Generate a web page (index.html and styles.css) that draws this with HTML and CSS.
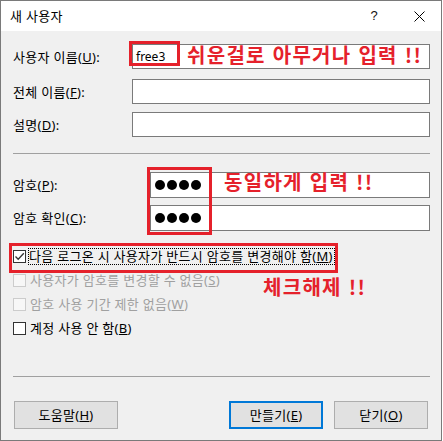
FILE: index.html
```html
<!DOCTYPE html>
<html lang="ko">
<head>
<meta charset="utf-8">
<title>새 사용자</title>
<link rel="stylesheet" href="styles.css">
</head>
<body>
<div class="dialog">
  <div class="titlebar">
    <span class="title">새 사용자</span>
    <span class="help">?</span>
    <svg class="close" width="11" height="11" viewBox="0 0 11 11"><path d="M0.5 0.5 L10.5 10.5 M10.5 0.5 L0.5 10.5" stroke="#000" stroke-width="1" fill="none"/></svg>
  </div>
  <div class="content">
    <div class="field first">
      <span class="label">사용자 이름(<u>U</u>):</span>
      <div class="box"><span class="val">free3</span></div>
    </div>
    <div class="field second">
      <span class="label">전체 이름(<u>F</u>):</span>
      <div class="box"></div>
    </div>
    <div class="field third">
      <span class="label">설명(<u>D</u>):</span>
      <div class="box"></div>
    </div>
    <div class="sep sep1"></div>
    <div class="field pw">
      <span class="label wide">암호(<u>P</u>):</span>
      <div class="box tall"><span class="dots" aria-label="••••"><i></i><i></i><i></i><i></i></span></div>
    </div>
    <div class="field pw2">
      <span class="label wide">암호 확인(<u>C</u>):</span>
      <div class="box tall"><span class="dots" aria-label="••••"><i></i><i></i><i></i><i></i></span></div>
    </div>
    <div class="checks">
      <div class="check">
        <span class="cb"><svg width="11" height="11" viewBox="0 0 11 11"><path d="M1.5 5.5 L4.2 8.3 L9.8 2.2" stroke="#333" stroke-width="1.3" fill="none"/></svg></span>
        <span class="ctext focus">다음 로그온 시 사용자가 반드시 암호를 변경해야 함(<u>M</u>)</span>
      </div>
      <div class="check disabled">
        <span class="cb"></span>
        <span class="ctext">사용자가 암호를 변경할 수 없음(<u>S</u>)</span>
      </div>
      <div class="check disabled">
        <span class="cb"></span>
        <span class="ctext">암호 사용 기간 제한 없음(<u>W</u>)</span>
      </div>
      <div class="check">
        <span class="cb"></span>
        <span class="ctext">계정 사용 안 함(<u>B</u>)</span>
      </div>
    </div>
    <div class="sep sep2"></div>
    <div class="buttons">
      <div class="btn help-btn">도움말(<u>H</u>)</div>
      <div class="btn default">만들기(<u>E</u>)</div>
      <div class="btn">닫기(<u>O</u>)</div>
    </div>
  </div>

  <div class="ann-box a1"></div>
  <div class="ann-text t1">쉬운걸로 아무거나 입력 !!</div>
  <div class="ann-box a2"></div>
  <div class="ann-text t2">동일하게 입력 !!</div>
  <div class="ann-box a3"></div>
  <div class="ann-text t3">체크해제 !!</div>
</div>
</body>
</html>
```

FILE: styles.css
```css
* { box-sizing: border-box; }
html, body { margin: 0; padding: 0; background: #ffffff; }
body {
  font-family: "Noto Sans", "Noto Sans CJK KR", sans-serif;
  font-size: 13px;
  letter-spacing: 0.3px;
  color: #000;
}
u { text-decoration: underline; text-underline-offset: 1px; }

.dialog {
  position: relative;
  width: 442px;
  height: 441px;
  border: 1px solid #7a7a7a;
  background: #f0f0f0;
  display: flex;
  flex-direction: column;
}

.titlebar {
  height: 30px;
  background: #ffffff;
  display: flex;
  align-items: center;
  padding: 0 16px 0 9px;
  flex: none;
}
.title { line-height: 16px; }
.help {
  margin-left: auto;
  margin-right: 36px;
  font-family: "Liberation Sans", sans-serif;
  font-size: 13px;
  line-height: 16px;
  color: #111;
}
.close { display: block; }

.content {
  flex: 1;
  padding: 13px 11px 0 12px;
  display: flex;
  flex-direction: column;
}

.field { display: flex; align-items: center; }
.field.second { margin-top: 10px; }
.field.third { margin-top: 8px; }
.field.pw { margin-top: 18px; }
.field.pw2 { margin-top: 7px; }

.label { width: 119px; flex: none; line-height: 16px; }
.label.wide { width: 137px; }

.box {
  flex: 1;
  height: 25px;
  background: #ffffff;
  border: 1px solid #7a7a7a;
  padding: 2px 3px 0;
}
.box.tall { height: 26px; padding: 0 4px; display: flex; align-items: center; }
.val { line-height: 17px; font-size: 12px; letter-spacing: 0; }

.dots { display: flex; gap: 2px; }
.dots i {
  display: block;
  width: 10px;
  height: 10px;
  border-radius: 50%;
  background: #000;
}

.sep { height: 1px; background: #a0a0a0; flex: none; }
.sep1 { margin-top: 16px; }
.sep2 { margin-top: 36px; }

.checks { margin-top: 13px; display: flex; flex-direction: column; }
.check { height: 24px; display: flex; align-items: center; }
.cb {
  width: 13px;
  height: 13px;
  border: 1px solid #333333;
  background: #ffffff;
  flex: none;
  display: flex;
  align-items: center;
  justify-content: center;
}
.cb svg { display: block; }
.ctext { margin-left: 4px; line-height: 15px; }
.ctext.focus { outline: 1px dotted #000; outline-offset: 0; padding: 0 1px 0 0; margin-left: 3px; }
.check.disabled .cb { border-color: #cccccc; background: #f7f7f7; }
.check.disabled .ctext { color: #a0a0a0; }

.buttons {
  margin-top: 24px;
  display: flex;
  padding: 0 2px 0 1px;
  gap: 11px;
}
.btn {
  width: 94px;
  height: 28px;
  background: #e1e1e1;
  border: 1px solid #adadad;
  display: flex;
  align-items: center;
  justify-content: center;
  line-height: 16px;
}
.btn.help-btn { width: 104px; margin-right: auto; }
.btn.default { border: 2px solid #0078d7; }

.ann-box {
  position: absolute;
  border: 3px solid #e5212b;
}
.a1 { left: 128px; top: 40px; width: 51px; height: 25px; }
.a2 { left: 146px; top: 166px; width: 65px; height: 68px; }
.a3 { left: 8px; top: 242px; width: 329px; height: 30px; }

.ann-text {
  position: absolute;
  font-family: "Noto Sans CJK KR", sans-serif;
  font-weight: bold;
  font-size: 20px;
  letter-spacing: 1.3px;
  line-height: 24px;
  color: #e5212b;
  white-space: nowrap;
}
.t1 { left: 186px; top: 42px; }
.t2 { left: 223px; top: 169px; }
.t3 { left: 262px; top: 274px; }
```
